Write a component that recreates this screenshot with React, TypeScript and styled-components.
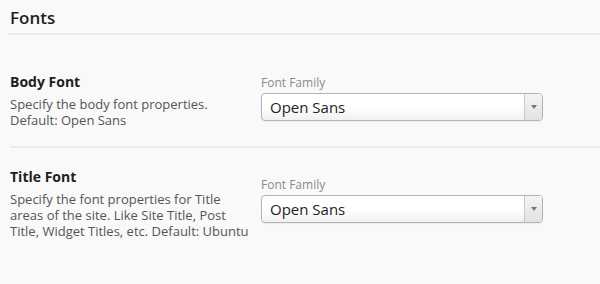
import React from "react";
import styled, { createGlobalStyle } from "styled-components";

const Global = createGlobalStyle`
  html, body { margin: 0; padding: 0; background: #f9f9f9; }
  body { font-family: "Open Sans", "Liberation Sans", sans-serif; color: #222; }
`;

const Page = styled.div`
  width: 600px;
  height: 284px;
  background: #f9f9f9;
  overflow: hidden;
`;

const Header = styled.h2`
  margin: 0 0 0 8px;
  padding: 6px 0 3px 2px;
  font-size: 17px;
  line-height: 24px;
  font-weight: 600;
  color: #1e1e1e;
  border-bottom: 2px solid #ebebeb;
`;

const Row = styled.div<{ $top: number; $height: number; $divider?: boolean }>`
  display: grid;
  grid-template-columns: 251px 282px;
  margin-left: 10px;
  padding-top: ${(p) => p.$top}px;
  height: ${(p) => p.$height}px;
  box-sizing: border-box;
  border-bottom: ${(p) => (p.$divider ? "2px solid #ebebeb" : "none")};
`;

const Info = styled.div`
  display: flex;
  flex-direction: column;
`;

const Title = styled.div`
  font-size: 14px;
  line-height: 18px;
  font-weight: 700;
  color: #1e1e1e;
  margin-bottom: 5px;
`;

const Desc = styled.div`
  font-size: 13px;
  line-height: 16px;
  color: #555;
`;

const Field = styled.div<{ $offset: number }>`
  display: flex;
  flex-direction: column;
  padding-top: ${(p) => p.$offset}px;
`;

const Label = styled.div`
  font-size: 12px;
  line-height: 14px;
  color: #8a8a8a;
  margin-bottom: 3px;
`;

const Select = styled.div`
  display: flex;
  height: 28px;
  box-sizing: border-box;
  border: 1px solid #b4b4b4;
  border-radius: 4px;
  background: linear-gradient(#ffffff 0%, #ffffff 50%, #f1f1f1 100%);
  box-shadow: 0 1px 1px rgba(0, 0, 0, 0.06);
  overflow: hidden;
`;

const Value = styled.div`
  flex: 1;
  padding-left: 8px;
  font-size: 15px;
  line-height: 26px;
  color: #222;
`;

const Arrow = styled.div`
  width: 17px;
  border-left: 1px solid #c8c8c8;
  background: linear-gradient(#f4f4f4, #e2e2e2);
  display: flex;
  align-items: center;
  justify-content: center;
`;

const FontSelect = () => (
  <Select>
    <Value>Open Sans</Value>
    <Arrow>
      <svg width="6" height="4" viewBox="0 0 6 4">
        <polygon points="0,0 6,0 3,4" fill="#777" />
      </svg>
    </Arrow>
  </Select>
);

export default function App() {
  return (
    <Page>
      <Global />
      <Header>Fonts</Header>
      <Row $top={38} $height={113} $divider>
        <Info>
          <Title>Body Font</Title>
          <Desc>
            Specify the body font properties.
            <br />
            Default: Open Sans
          </Desc>
        </Info>
        <Field $offset={3}>
          <Label>Font Family</Label>
          <FontSelect />
        </Field>
      </Row>
      <Row $top={20} $height={134}>
        <Info>
          <Title>Title Font</Title>
          <Desc>
            Specify the font properties for Title
            <br />
            areas of the site. Like Site Title, Post
            <br />
            Title, Widget Titles, etc. Default: Ubuntu
          </Desc>
        </Info>
        <Field $offset={10}>
          <Label>Font Family</Label>
          <FontSelect />
        </Field>
      </Row>
    </Page>
  );
}
